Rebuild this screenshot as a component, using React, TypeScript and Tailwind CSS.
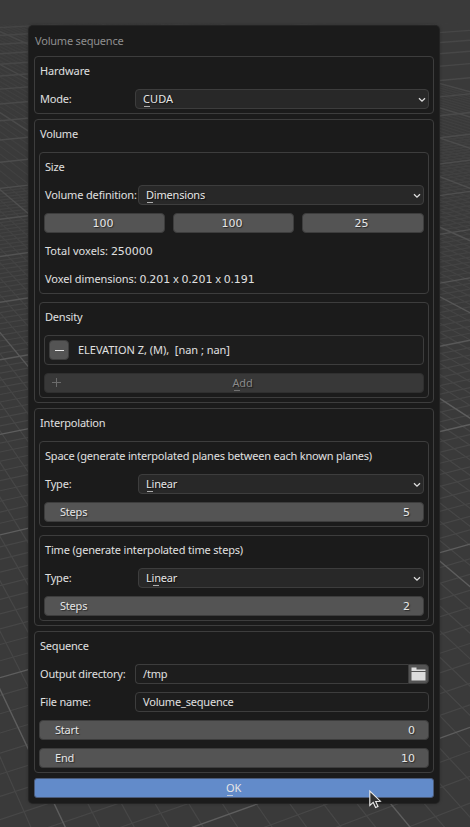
import React from "react";

type Kids = { children?: React.ReactNode };

/* Perspective floor grid: two families of lines, each with its own vanishing point. */
const HORIZON = -144;
const VP_RIGHT = 2890;
const VP_LEFT = -395;

type Line = { x1: number; y1: number; x2: number; y2: number; major: boolean };

function gridLines(): Line[] {
  const lines: Line[] = [];
  for (let i = -6; i <= 190; i++) {
    const y = 1 / (0.000961 + 0.0000256 * i) + HORIZON;
    const slope = (y - HORIZON) / VP_RIGHT;
    const major = i % 10 === 0;
    if (!major && i > 80) continue;
    lines.push({ x1: 0, y1: y, x2: 470, y2: y - slope * 470, major });
  }
  for (let i = -14; i <= 90; i++) {
    const t = 0.474 + 0.0355 * i;
    const major = i % 10 === 0;
    lines.push({
      x1: VP_LEFT,
      y1: HORIZON,
      x2: VP_LEFT + t * 1000,
      y2: HORIZON + 1000,
      major,
    });
  }
  return lines.sort((a, b) => Number(a.major) - Number(b.major));
}

function Floor() {
  return (
    <svg className="absolute inset-0" width="470" height="827" viewBox="0 0 470 827">
      <defs>
        <linearGradient id="fade" x1="0" y1="0" x2="0" y2="1">
          <stop offset="0.028" stopColor="#000" />
          <stop offset="0.032" stopColor="#555" />
          <stop offset="0.2" stopColor="#888" />
          <stop offset="0.5" stopColor="#fff" />
        </linearGradient>
        <mask id="far" maskUnits="userSpaceOnUse" x="0" y="0" width="470" height="827">
          <rect width="470" height="827" fill="url(#fade)" />
        </mask>
      </defs>
      <g mask="url(#far)">
        {gridLines().map((l, i) => (
          <line
            key={i}
            x1={l.x1}
            y1={l.y1}
            x2={l.x2}
            y2={l.y2}
            stroke={l.major ? "#5e5e5e" : "#474747"}
            strokeWidth={l.major ? 1.4 : 1.2}
          />
        ))}
      </g>
    </svg>
  );
}

/* Digits use a wider face than the letters. */
function T({ s, className = "" }: { s: string; className?: string }) {
  return (
    <span className={`whitespace-pre ${className}`}>
      {s.split(/([0-9]+)/).map((p, i) =>
        /^[0-9]/.test(p) ? (
          <span key={i} className="font-['DejaVu_Sans',sans-serif] tracking-normal">
            {p}
          </span>
        ) : (
          p
        ),
      )}
    </span>
  );
}

function Mark({ children }: Kids) {
  return (
    <span className="relative">
      {children}
      <span className="absolute left-px top-[15px] h-px w-[6px] bg-current opacity-70" />
    </span>
  );
}

function Box({ children }: Kids) {
  return (
    <div className="flex flex-col gap-2 rounded-[4px] border border-[#3d3d3d] p-1">{children}</div>
  );
}

function Label({ s, className = "" }: { s: string; className?: string }) {
  return (
    <div className="flex h-5 items-center pl-px">
      <T s={s} className={className} />
    </div>
  );
}

function Dropdown({ children }: Kids) {
  return (
    <div className="flex h-5 flex-1 items-center justify-between rounded-[4px] border border-[#3d3d3d] bg-[#282828] pl-[7px] pr-[2px] text-[#e6e6e6] [text-shadow:1px_1px_1px_#111]">
      <span className="whitespace-pre">{children}</span>
      <svg className="mt-px" width="8" height="6" viewBox="0 0 8 6" fill="none">
        <path d="M1 1.2 L4 4.2 L7 1.2" stroke="#dedede" strokeWidth="1.3" />
      </svg>
    </div>
  );
}

function Field({ label, w, children }: Kids & { label: React.ReactNode; w: string }) {
  return (
    <div className="flex h-5 items-center">
      <div className={`${w} shrink-0 whitespace-nowrap pl-px`}>{label}</div>
      {children}
    </div>
  );
}

const solid =
  "flex h-5 items-center rounded-[4px] border border-[#3d3d3d] bg-[#545454] text-[#e6e6e6] [text-shadow:1px_1px_1px_#2a2a2a]";

function Slider({ name, value }: { name: string; value: string }) {
  return (
    <div className={`${solid} justify-between pl-[15px] pr-[13px]`}>
      <T s={name} />
      <T s={value} />
    </div>
  );
}

function Num({ value, w }: { value: string; w: string }) {
  return (
    <div className={`${solid} ${w} justify-center pr-[3px]`}>
      <T s={value} />
    </div>
  );
}

export default function App() {
  return (
    <div className="relative h-[827px] w-[470px] overflow-hidden bg-[#3a3a3a] font-['Noto_Sans',sans-serif] text-[11px] leading-5 tracking-[-0.2px] text-[#e0e0e0]">
      <Floor />
      <div className="relative ml-[29px] pt-[26px]">
        <div className="flex w-[410px] flex-col gap-[5px] rounded-[4px] bg-[#1b1b1b] p-[5px] shadow-[0_0_0_1px_#242424,0_0_3px_1px_rgba(0,0,0,0.25)]">
          <div className="flex h-5 items-center pl-px text-[#8f8f8f]">
            <T s="Volume sequence" />
          </div>

          <Box>
            <Label s="Hardware" className="tracking-[-0.1px]" />
            <Field label={<T s="Mode:" />} w="w-[96px]">
              <Dropdown>
                <span className="tracking-[0.1px]">
                  <Mark>C</Mark>UDA
                </span>
              </Dropdown>
            </Field>
          </Box>

          <Box>
            <Label s="Volume" />
            <Box>
              <Label s="Size" />
              <Field label={<T s="Volume definition:" className="tracking-[-0.15px]" />} w="w-[94px]">
                <Dropdown>
                  <Mark>D</Mark>imensions
                </Dropdown>
              </Field>
              <div className="flex gap-2">
                <Num value="100" w="w-[121px]" />
                <Num value="100" w="w-[121px]" />
                <Num value="25" w="w-[122px]" />
              </div>
              <Label s="Total voxels: 250000" className="tracking-[0.02px]" />
              <Label s="Voxel dimensions: 0.201 x 0.201 x 0.191" className="tracking-[-0.08px]" />
            </Box>
            <Box>
              <Label s="Density" />
              <div className="flex items-center gap-[9px] rounded-[4px] border border-[#3d3d3d] bg-[#1d1d1d] p-1">
                <div className={`${solid} w-5 justify-center`}>
                  <div className="h-px w-[9px] bg-[#e6e6e6]" />
                </div>
                <T s="ELEVATION Z, (M),  [nan ; nan]" className="tracking-[-0.03px]" />
              </div>
              <div className="relative flex h-5 items-center justify-center rounded-[4px] border border-[#2f2f2f] bg-[#383838] pl-[17px] text-[#8a8a8a] [text-shadow:1px_1px_1px_#1c1c1c]">
                <svg className="absolute left-[7px] top-[4px]" width="9" height="9" viewBox="0 0 9 9">
                  <path d="M0 4.5H9M4.5 0V9" stroke="#6c6c6c" strokeWidth="1" />
                </svg>
                <span>
                  <Mark>A</Mark>dd
                </span>
              </div>
            </Box>
          </Box>

          <Box>
            <Label s="Interpolation" />
            <Box>
              <Label s="Space (generate interpolated planes between each known planes)" />
              <Field label={<T s="Type:" />} w="w-[94px]">
                <Dropdown>
                  <Mark>L</Mark>inear
                </Dropdown>
              </Field>
              <Slider name="Steps" value="5" />
            </Box>
            <Box>
              <Label s="Time (generate interpolated time steps)" className="tracking-[-0.17px]" />
              <Field label={<T s="Type:" />} w="w-[94px]">
                <Dropdown>
                  L<Mark>i</Mark>near
                </Dropdown>
              </Field>
              <Slider name="Steps" value="2" />
            </Box>
          </Box>

          <Box>
            <Label s="Sequence" />
            <Field label={<T s="Output directory:" />} w="w-[96px]">
              <div className="flex h-5 flex-1 items-center rounded-l-[4px] border border-r-0 border-[#3d3d3d] bg-[#1d1d1d] pl-[7px]">
                <T s="/tmp" />
              </div>
              <div className="flex h-5 w-[21px] items-center justify-center rounded-r-[4px] border border-[#3d3d3d] bg-[#545454]">
                <svg width="15" height="14" viewBox="0 0 15 14" fill="#dcdcdc">
                  <path d="M0.5 0.5H5.5V2.5H14.5V4H0.5Z" />
                  <path d="M0.5 5H14.5V13.5H0.5Z" />
                </svg>
              </div>
            </Field>
            <Field label={<T s="File name:" />} w="w-[96px]">
              <div className="flex h-5 flex-1 items-center rounded-[4px] border border-[#3d3d3d] bg-[#1d1d1d] pl-[7px]">
                <T s="Volume_sequence" />
              </div>
            </Field>
            <Slider name="Start" value="0" />
            <Slider name="End" value="10" />
          </Box>

          <div className="flex h-5 items-center justify-center rounded-[3px] border border-[#4a5a78] bg-[#628bca] pr-px text-[#e6e6e6]">
            <span>
              <Mark>O</Mark>K
            </span>
          </div>
        </div>
      </div>
      <svg className="absolute left-[368px] top-[789px]" width="15" height="21" viewBox="0 0 15 21">
        <path
          d="M1.8 2 V16.5 L5.2 13.4 L7.6 18.6 L10 17.5 L7.7 12.5 L12.4 12.2 Z"
          fill="#303030"
          stroke="#ececec"
          strokeWidth="1.1"
        />
      </svg>
    </div>
  );
}
